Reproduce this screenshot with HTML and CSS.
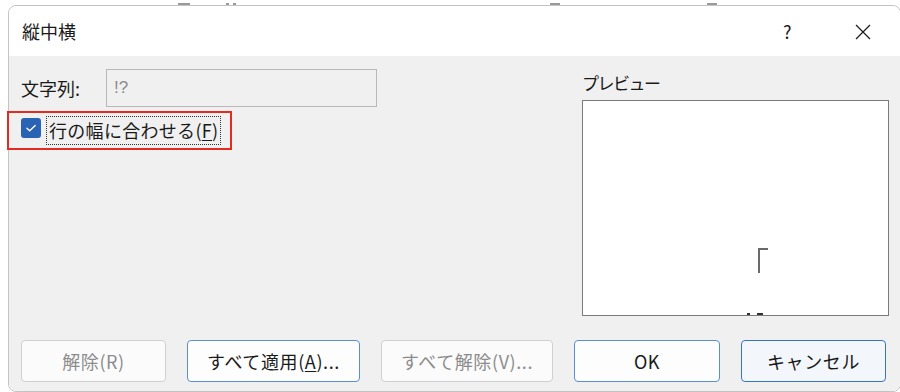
FILE: index.html
```html
<!DOCTYPE html>
<html lang="ja">
<head>
<meta charset="UTF-8">
<title>縦中横</title>
<link rel="stylesheet" href="styles.css">
</head>
<body>

<div class="backdrop">
  <span class="speck" style="left:178px;width:12px"></span>
  <span class="speck" style="left:226px;width:3px"></span>
  <span class="speck" style="left:233px;width:3px"></span>
  <span class="speck" style="left:550px;width:10px"></span>
  <span class="speck" style="left:707px;width:10px"></span>
</div>

<div class="dialog">
  <div class="titlebar">
    <span class="title">縦中横</span>
    <span class="help">?</span>
    <span class="close">
      <svg width="16" height="16" viewBox="0 0 16 16"><path d="M1 1L15 15M15 1L1 15" stroke="#1a1a1a" stroke-width="1.2" fill="none"/></svg>
    </span>
  </div>

  <div class="body">
    <div class="main">
      <div class="left">
        <div class="field-row">
          <label class="field-label">文字列:</label>
          <div class="textbox">!?</div>
        </div>
        <!-- 赤枠: 注目させたい項目 -->
        <div class="highlight">
          <span class="checkbox">
            <svg width="20" height="20" viewBox="0 0 20 20"><path d="M6 10.2l2.7 2.6L14.2 7.4" stroke="#fff" stroke-width="1.4" fill="none" stroke-linecap="round" stroke-linejoin="round"/></svg>
          </span>
          <span class="focus">行の幅に合わせる(<u>F</u>)</span>
        </div>
      </div>
      <div class="right">
        <div class="preview-label">プレビュー</div>
        <div class="preview">
          <span class="bracket" title="「"></span>
          <span class="dot" style="left:164px;width:3px"></span>
          <span class="dot" style="left:174px;width:6px"></span>
        </div>
      </div>
    </div>

    <div class="buttons">
      <button class="btn w145" disabled>解除(R)</button>
      <button class="btn w173 primary">すべて適用(<u>A</u>)...</button>
      <button class="btn w172" disabled>すべて解除(V)...</button>
      <button class="btn w146 primary">OK</button>
      <button class="btn w145 cancel">キャンセル</button>
    </div>
  </div>
</div>

</body>
</html>
```

FILE: styles.css
```css
html, body { margin:0; padding:0; }
body {
  width:900px; height:392px; overflow:hidden; background:#fff;
  font-family:"Noto Sans CJK JP", "Noto Sans", sans-serif; color:#1a1a1a;
  position:relative;
}

.backdrop { height:5px; position:relative; }
.speck { position:absolute; top:3px; height:2px; background:#9a9a9a; }

.dialog {
  margin-left:8px; width:893px; height:387px; box-sizing:border-box;
  border:1px solid #c4c4c4; border-radius:8px;
  display:flex; flex-direction:column;
}

.titlebar {
  height:50px; background:#fff; display:flex; align-items:center;
  padding-left:13px; flex-shrink:0; border-radius:8px 8px 0 0;
}
.title { font-size:18px; flex:1; }
.help  { font-size:18px; width:72px; }
.close { width:45px; display:flex; padding-top:2px; }

.body {
  flex:1; background:#f0f0f0; border-radius:0 0 8px 8px;
  padding:13px 11px 0 12px;
  display:flex; flex-direction:column;
}

.main { display:flex; height:247px; }
.left { flex:1; }
.right { width:307px; margin-top:2px; }

.field-row { display:flex; align-items:center; height:38px; }
.field-label { width:85px; font-size:18px; }
.textbox {
  width:271px; height:38px; box-sizing:border-box;
  border:1px solid #b8b8b8; background:#f0f0f0;
  color:#8a8a8a; font-size:17px; font-family:"Liberation Sans", sans-serif;
  padding:8px 0 0 7px;
}

.highlight {
  display:flex; align-items:center;
  width:225px; height:39px; box-sizing:border-box;
  margin:4px 0 0 -14px; padding:0 0 0 12px;
  border:2px solid #e32b22;
}
.checkbox {
  width:20px; height:20px; border-radius:3px; background:#2a62b4;
  display:flex; margin-top:-5px;
}
.focus {
  margin-left:5px; margin-top:-1px; padding:0 2px;
  border:1px dotted #333; font-size:18px; line-height:27px;
  letter-spacing:0.3px;
}
.focus u { text-underline-offset:2px; }

.preview-label { font-size:17px; line-height:24px; margin-bottom:5px; letter-spacing:-1.5px; }
.preview {
  height:216px; box-sizing:border-box;
  border:1px solid #7a7a7a; background:#fff;
  position:relative; overflow:hidden;
}
.bracket {
  position:absolute; left:175px; top:147px;
  width:8px; height:23px;
  border-left:2px solid #6a6a6a; border-top:2px solid #6a6a6a;
}
.dot { position:absolute; bottom:0; height:2px; background:#333; }

.buttons { display:flex; margin-top:24px; }
.btn {
  height:42px; margin-right:21px; box-sizing:border-box;
  border:1px solid #d0d0d0; border-radius:4px; background:#fbfbfb;
  font-family:"Noto Sans CJK JP", "Noto Sans", sans-serif; font-size:18px;
  letter-spacing:0.6px; color:#1a1a1a; padding:0;
}
.btn:disabled { color:#8c8c8c; }
.btn u { text-underline-offset:2px; }
.btn.primary { border-color:#5a8fd0; background:#fdfdfd; }
.btn.cancel { border-color:#3a74bf; background:#f3f7fc; margin-right:0; }
.w145 { width:145px; }
.w146 { width:146px; }
.w172 { width:172px; }
.w173 { width:173px; }
```
